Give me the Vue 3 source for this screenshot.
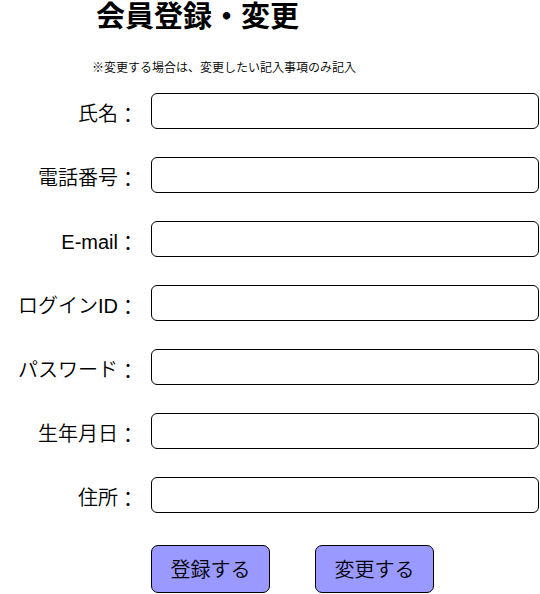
<script setup>
const fields = [
  { id: 'name', label: '氏名', type: 'text' },
  { id: 'tel', label: '電話番号', type: 'tel' },
  { id: 'email', label: 'E-mail', type: 'email' },
  { id: 'login', label: 'ログインID', type: 'text' },
  { id: 'password', label: 'パスワード', type: 'password' },
  { id: 'birthday', label: '生年月日', type: 'text' },
  { id: 'address', label: '住所', type: 'text' },
]
</script>

<template>
  <main class="page">
    <header class="head">
      <h1 class="title">会員登録・変更</h1>
      <p class="note">※変更する場合は、変更したい記入事項のみ記入</p>
    </header>
    <form class="form" @submit.prevent>
      <div v-for="f in fields" :key="f.id" class="row">
        <label class="label" :for="f.id">{{ f.label }}<span class="colon">：</span></label>
        <input :id="f.id" class="input" :type="f.type" />
      </div>
      <div class="actions">
        <button class="button" type="submit">登録する</button>
        <button class="button" type="button">変更する</button>
      </div>
    </form>
  </main>
</template>

<style>
body {
  background: #fff;
}
</style>

<style scoped>
.page {
  color: #000;
  font-family: "Liberation Sans", "Noto Sans CJK JP", sans-serif;
  font-weight: 350;
}
.title {
  margin: 0;
  padding-left: 96px;
  font-size: 29px;
  line-height: 34px;
  font-weight: 700;
}
.note {
  margin: 0;
  padding: 25px 0 0 92px;
  font-size: 12px;
  line-height: 18px;
}
.form {
  display: flex;
  flex-direction: column;
  gap: 28px;
  padding: 16px 1px 0 0;
}
.row {
  display: grid;
  grid-template-columns: 138px 1fr;
  column-gap: 13px;
}
.label {
  padding-top: 7px;
  font-size: 20px;
  line-height: 28px;
  text-align: right;
  white-space: nowrap;
}
.colon {
  line-height: 1;
  font-weight: 400;
  vertical-align: -2px;
}
.input {
  box-sizing: border-box;
  width: 100%;
  height: 36px;
  padding: 0 10px;
  border: 1px solid #000;
  border-radius: 6px;
  background: #fff;
  font: inherit;
  font-size: 20px;
}
.actions {
  display: flex;
  gap: 45px;
  padding: 4px 0 0 151px;
}
.button {
  box-sizing: border-box;
  min-width: 119px;
  height: 48px;
  padding: 1px 18px 0;
  border: 1px solid #000;
  border-radius: 7px;
  background: #9999ff;
  color: #000;
  font: inherit;
  font-size: 20px;
  line-height: 30px;
}
</style>
